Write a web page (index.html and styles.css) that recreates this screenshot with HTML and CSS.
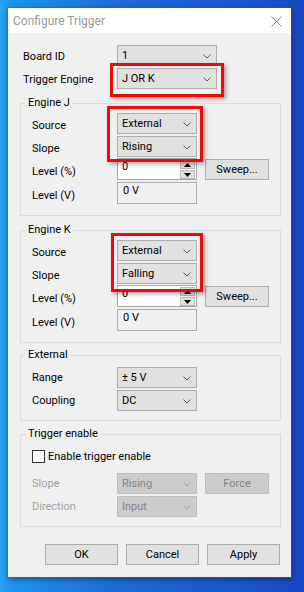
FILE: index.html
```html
<!DOCTYPE html>
<html lang="en">

<head>
    <meta charset="UTF-8">
    <meta name="viewport" content="width=device-width, initial-scale=1.0">
    <title>Configure Trigger</title>
    <link rel="stylesheet" href="styles.css">
</head>

<body>

    <div class="dialog">
        <div class="titlebar">
            <span class="title">Configure Trigger</span>
            <svg class="close" width="11" height="11" viewBox="0 0 11 11">
                <path d="M0.5 0.5L10.5 10.5M10.5 0.5L0.5 10.5" stroke="#8c8c8c" stroke-width="1" fill="none" />
            </svg>
        </div>

        <div class="content">
            <div class="top">
                <div class="row">
                    <span class="lbl lbl-top">Board ID</span>
                    <div class="combo wide">1<svg class="chev" width="8" height="5" viewBox="0 0 8 5"><path d="M0.5 0.5L4 4L7.5 0.5" /></svg></div>
                </div>
                <div class="row">
                    <span class="lbl lbl-top">Trigger Engine</span>
                    <div class="combo wide">J OR K<svg class="chev" width="8" height="5" viewBox="0 0 8 5"><path d="M0.5 0.5L4 4L7.5 0.5" /></svg></div>
                </div>
                <div class="mark mark-engine"></div>
            </div>

            <fieldset class="group">
                <legend>Engine J</legend>
                <div class="rows">
                    <div class="mark mark-j"></div>
                    <div class="row">
                        <span class="lbl">Source</span>
                        <div class="combo">External<svg class="chev" width="8" height="5" viewBox="0 0 8 5"><path d="M0.5 0.5L4 4L7.5 0.5" /></svg></div>
                    </div>
                    <div class="row">
                        <span class="lbl">Slope</span>
                        <div class="combo">Rising<svg class="chev" width="8" height="5" viewBox="0 0 8 5"><path d="M0.5 0.5L4 4L7.5 0.5" /></svg></div>
                    </div>
                    <div class="row row-edit">
                        <span class="lbl">Level (%)</span>
                        <div class="edit">
                            <span class="val">0</span>
                            <div class="spin">
                                <div class="spin-btn"><svg width="7" height="4" viewBox="0 0 7 4"><path d="M3.5 0L7 4H0Z" /></svg></div>
                                <div class="spin-btn"><svg width="7" height="4" viewBox="0 0 7 4"><path d="M0 0H7L3.5 4Z" /></svg></div>
                            </div>
                        </div>
                        <div class="btn sweep">Sweep...</div>
                    </div>
                    <div class="row row-edit">
                        <span class="lbl">Level (V)</span>
                        <div class="readonly">0 V</div>
                    </div>
                </div>
            </fieldset>

            <fieldset class="group">
                <legend>Engine K</legend>
                <div class="rows">
                    <div class="mark mark-k"></div>
                    <div class="row">
                        <span class="lbl">Source</span>
                        <div class="combo">External<svg class="chev" width="8" height="5" viewBox="0 0 8 5"><path d="M0.5 0.5L4 4L7.5 0.5" /></svg></div>
                    </div>
                    <div class="row">
                        <span class="lbl">Slope</span>
                        <div class="combo">Falling<svg class="chev" width="8" height="5" viewBox="0 0 8 5"><path d="M0.5 0.5L4 4L7.5 0.5" /></svg></div>
                    </div>
                    <div class="row row-edit">
                        <span class="lbl">Level (%)</span>
                        <div class="edit">
                            <span class="val">0</span>
                            <div class="spin">
                                <div class="spin-btn"><svg width="7" height="4" viewBox="0 0 7 4"><path d="M3.5 0L7 4H0Z" /></svg></div>
                                <div class="spin-btn"><svg width="7" height="4" viewBox="0 0 7 4"><path d="M0 0H7L3.5 4Z" /></svg></div>
                            </div>
                        </div>
                        <div class="btn sweep">Sweep...</div>
                    </div>
                    <div class="row row-edit">
                        <span class="lbl">Level (V)</span>
                        <div class="readonly">0 V</div>
                    </div>
                </div>
            </fieldset>

            <fieldset class="group group-ext">
                <legend>External</legend>
                <div class="rows rows-ext">
                    <div class="row">
                        <span class="lbl">Range</span>
                        <div class="combo">± 5 V<svg class="chev" width="8" height="5" viewBox="0 0 8 5"><path d="M0.5 0.5L4 4L7.5 0.5" /></svg></div>
                    </div>
                    <div class="row">
                        <span class="lbl">Coupling</span>
                        <div class="combo">DC<svg class="chev" width="8" height="5" viewBox="0 0 8 5"><path d="M0.5 0.5L4 4L7.5 0.5" /></svg></div>
                    </div>
                </div>
            </fieldset>

            <fieldset class="group group-enable">
                <legend>Trigger enable</legend>
                <div class="rows rows-ext">
                    <div class="row check-row">
                        <span class="checkbox"></span>
                        <span>Enable trigger enable</span>
                    </div>
                    <div class="row disabled">
                        <span class="lbl">Slope</span>
                        <div class="combo">Rising<svg class="chev" width="8" height="5" viewBox="0 0 8 5"><path d="M0.5 0.5L4 4L7.5 0.5" /></svg></div>
                        <div class="btn sweep">Force</div>
                    </div>
                    <div class="row disabled">
                        <span class="lbl">Direction</span>
                        <div class="combo">Input<svg class="chev" width="8" height="5" viewBox="0 0 8 5"><path d="M0.5 0.5L4 4L7.5 0.5" /></svg></div>
                    </div>
                </div>
            </fieldset>

            <div class="buttons">
                <div class="btn action">OK</div>
                <div class="btn action">Cancel</div>
                <div class="btn action">Apply</div>
            </div>
        </div>
    </div>

</body>

</html>
```

FILE: styles.css
```css
body {
    margin: 0;
    padding: 0;
    width: 304px;
    height: 592px;
    overflow: hidden;
    background: linear-gradient(to right, #2ba4f0 0, #1f95ec 9px, #1c6ad8 40%, #1a50cb 90%, #1748c4 100%);
    font-family: Roboto, "Liberation Sans", sans-serif;
    font-size: 11px;
    color: #000;
}

.dialog {
    margin: 8px 0 0 8px;
    width: 283px;
    height: 569px;
    background-color: #f0f0f0;
    box-shadow: 0 0 0 1px rgba(90, 90, 90, 0.5), 1px 2px 6px rgba(0, 0, 0, 0.45);
}

.titlebar {
    height: 25px;
    background-color: #fff;
    display: flex;
    align-items: center;
    justify-content: space-between;
    padding: 0 9px 0 5px;
}

.title {
    font-size: 12px;
    color: #9a9a9a;
}

.close {
    margin-top: 2px;
}

.content {
    padding: 12px 10px 0 12px;
}

.top {
    position: relative;
    display: flex;
    flex-direction: column;
    gap: 2px;
}

.row {
    display: flex;
    align-items: center;
    height: 21px;
}

.lbl {
    width: 85px;
    flex-shrink: 0;
}

.rows .lbl {
    margin-top: 4px;
}

.rows-ext .lbl {
    margin-top: 0;
}

.lbl-top {
    width: 94px;
    margin-left: 3px;
    margin-top: 2px;
}

.combo {
    position: relative;
    box-sizing: border-box;
    width: 80px;
    height: 21px;
    line-height: 19px;
    padding-left: 4px;
    background-color: #e1e1e1;
    border: 1px solid #adadad;
}

.combo.wide {
    width: 100px;
}

.chev {
    position: absolute;
    right: 5px;
    top: 8px;
}

.chev path {
    stroke: #5f5f5f;
    stroke-width: 1;
    fill: none;
}

.group {
    margin: 7px 0 0 0;
    padding: 0;
    width: 261px;
    box-sizing: border-box;
    border: 1px solid #dcdcdc;
    min-inline-size: 0;
}

.group-ext {
    margin-top: 5px;
}

.group-enable {
    margin-top: 6px;
}

.group legend {
    margin-left: 5px;
    padding: 0 2px;
    line-height: 14px;
}

.rows {
    position: relative;
    display: flex;
    flex-direction: column;
    gap: 2px;
    padding: 3px 11px 11px 11px;
}

.rows-ext {
    padding: 5px 11px 9px 11px;
}

.row-edit {
    height: 22px;
}

.row-edit:nth-of-type(4) {
    margin-top: -1px;
}

.edit {
    box-sizing: border-box;
    width: 80px;
    height: 22px;
    background-color: #fff;
    border: 1px solid #a6a6a6;
    display: flex;
    justify-content: space-between;
}

.val {
    padding: 1px 0 0 4px;
    line-height: 14px;
}

.spin {
    display: flex;
    flex-direction: column;
    gap: 1px;
    padding: 1px 1px 0 0;
}

.spin-btn {
    box-sizing: border-box;
    width: 15px;
    height: 9px;
    background-color: #e1e1e1;
    border: 1px solid #b9b9b9;
    display: flex;
    align-items: center;
    justify-content: center;
}

.spin-btn svg path {
    fill: #000;
}

.readonly {
    box-sizing: border-box;
    width: 80px;
    height: 22px;
    padding: 1px 0 0 5px;
    line-height: 14px;
    background-color: #f0f0f0;
    border: 1px solid #adadad;
}

.btn {
    box-sizing: border-box;
    height: 21px;
    line-height: 19px;
    text-align: center;
    background-color: #e1e1e1;
    border: 1px solid #adadad;
}

.sweep {
    width: 64px;
    margin-left: 8px;
}

.check-row {
    margin-bottom: 4px;
}

.checkbox {
    box-sizing: border-box;
    width: 13px;
    height: 13px;
    background-color: #fff;
    border: 1px solid #333;
    margin-right: 3px;
}

.disabled {
    color: #a0a0a0;
}

.disabled .combo,
.disabled .btn {
    background-color: #cccccc;
    border-color: #bfbfbf;
    color: #838383;
}

.disabled .chev path {
    stroke: #a5a5a5;
}

.buttons {
    display: flex;
    justify-content: flex-end;
    gap: 8px;
    margin-top: 17px;
    padding-right: 1px;
}

.action {
    width: 73px;
}

/* red highlight boxes drawn over the dialog */
.mark {
    position: absolute;
    box-sizing: border-box;
    border: 3px solid #ee0a0a;
    box-shadow: 2px 2px 4px rgba(0, 0, 0, 0.35);
    pointer-events: none;
}

.mark-engine {
    left: 90px;
    top: 18px;
    width: 114px;
    height: 34px;
}

.mark-j {
    left: 86px;
    top: -4px;
    width: 96px;
    height: 56px;
}

.mark-k {
    left: 90px;
    top: -4px;
    width: 92px;
    height: 59px;
}
```
